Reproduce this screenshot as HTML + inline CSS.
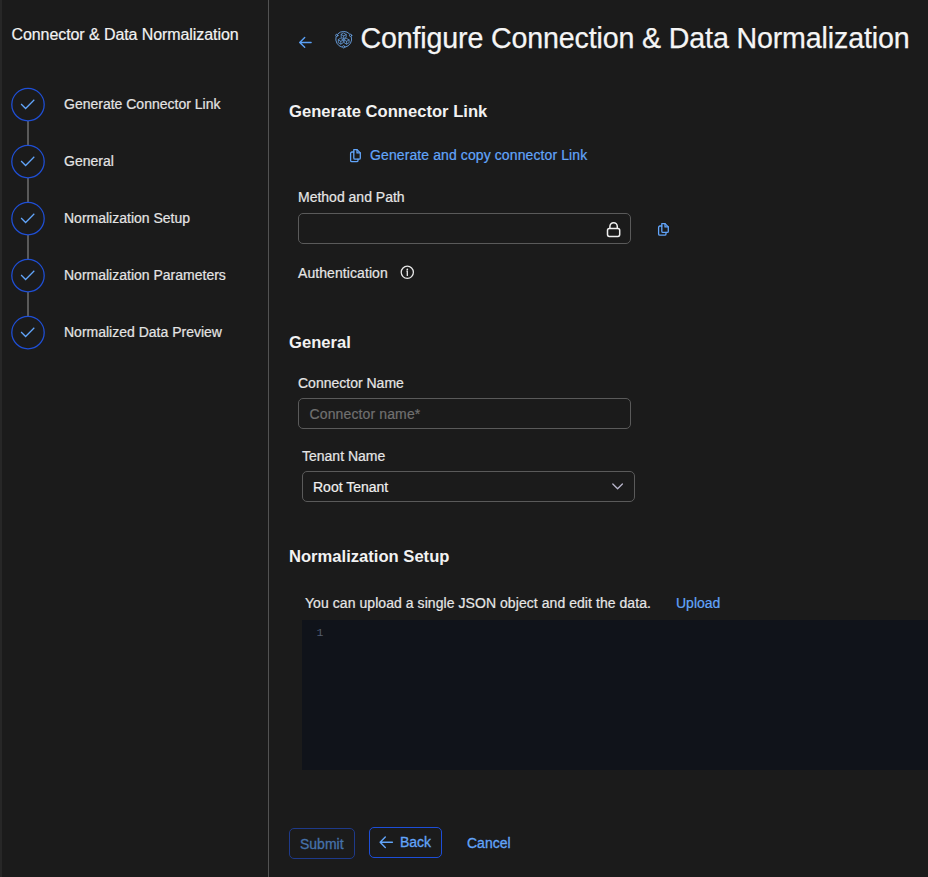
<!DOCTYPE html>
<html>
<head>
<meta charset="utf-8">
<style>
html,body{margin:0;padding:0;}
body{width:928px;height:877px;overflow:hidden;background:#1b1b1b;position:relative;font-family:"Liberation Sans",sans-serif;color:#e8e8e8;}
.a{position:absolute;white-space:nowrap;line-height:1;}
.strip{position:absolute;left:0;top:0;width:2px;height:877px;background:#272727;}
.vline{position:absolute;left:268px;top:0;width:1px;height:877px;background:#525252;}
.stitle{left:11.5px;top:27.2px;font-size:16px;color:#f2f2f2;letter-spacing:-0.08px;-webkit-text-stroke:0.2px currentColor;}
.circ{position:absolute;left:11px;width:32px;height:32px;border:1px solid #2450d2;border-radius:50%;}
.conn{position:absolute;left:27px;width:2px;height:24px;background:#5a5a5a;}
.slab{left:64px;font-size:14px;color:#e4e4e4;-webkit-text-stroke:0.2px currentColor;}
.title{left:360.5px;top:24.2px;font-size:28.6px;color:#f5f5f5;letter-spacing:-0.14px;-webkit-text-stroke:0.25px currentColor;}
.h{left:289px;font-size:16.6px;font-weight:bold;color:#f2f2f2;}
.lbl{font-size:14px;color:#e6e6e6;-webkit-text-stroke:0.2px currentColor;}
.blue{color:#62a5fa;}
.box{position:absolute;border:1px solid #5a5a5a;border-radius:5px;box-sizing:border-box;}
.editor{position:absolute;left:302px;top:620px;width:626px;height:150px;background:#10131a;}
.btn{position:absolute;box-sizing:border-box;border-radius:5px;}
</style>
</head>
<body>
<div class="strip"></div>
<div class="vline"></div>
<div class="a stitle">Connector &amp; Data Normalization</div>

<!-- steps -->
<div class="conn" style="top:121px"></div>
<div class="conn" style="top:178px"></div>
<div class="conn" style="top:235px"></div>
<div class="conn" style="top:292px"></div>
<svg style="position:absolute;left:0;top:0" width="60" height="360">
  <g fill="none" stroke="#1f4fd6" stroke-width="1.25">
    <circle cx="28" cy="104.6" r="16.2"/>
    <circle cx="28" cy="161.6" r="16.2"/>
    <circle cx="28" cy="218.6" r="16.2"/>
    <circle cx="28" cy="275.6" r="16.2"/>
    <circle cx="28" cy="332.6" r="16.2"/>
  </g>
  <g fill="none" stroke="#62a5fa" stroke-width="1.25" stroke-linecap="butt" stroke-linejoin="miter">
    <path d="M21.1 104.0 L25.6 108.5 L34.3 99.8"/>
    <path d="M21.1 161.0 L25.6 165.5 L34.3 156.8"/>
    <path d="M21.1 218.0 L25.6 222.5 L34.3 213.8"/>
    <path d="M21.1 275.0 L25.6 279.5 L34.3 270.8"/>
    <path d="M21.1 332.0 L25.6 336.5 L34.3 327.8"/>
  </g>
</svg>
<div class="a slab" style="top:97.0px">Generate Connector Link</div>
<div class="a slab" style="top:154.0px">General</div>
<div class="a slab" style="top:211.0px">Normalization Setup</div>
<div class="a slab" style="top:268.0px">Normalization Parameters</div>
<div class="a slab" style="top:325.0px">Normalized Data Preview</div>

<!-- header -->
<svg style="position:absolute;left:296px;top:34px" width="18" height="16" viewBox="296 34 18 16">
  <g fill="none" stroke="#5aa0f5" stroke-width="1.4" stroke-linecap="round" stroke-linejoin="round">
    <path d="M299.7 42.45 L311.1 42.45 M304.7 37.6 L299.7 42.45 L304.7 47.3"/>
  </g>
</svg>
<svg style="position:absolute;left:333px;top:29px" width="22" height="22" viewBox="333 29 22 22">
  <g fill="none" stroke="#6aa3e4" stroke-linecap="round" stroke-linejoin="round">
    <g stroke-width="0.9">
    <path d="M337.95 33.74 A8 8 0 0 1 349.45 33.74"/>
    <path d="M351.39 37.09 A8 8 0 0 1 345.64 47.06"/>
    <path d="M341.76 47.06 A8 8 0 0 1 336.01 37.09"/>
    <circle cx="336.8" cy="35.4" r="1.15"/>
    <circle cx="350.6" cy="35.4" r="1.15"/>
    <circle cx="343.7" cy="46.8" r="1.15"/>
    </g>
    <g stroke-width="0.75">
    <path d="M343.70 33.10 L346.20 34.50 L346.20 37.30 L343.70 38.70 L341.20 37.30 L341.20 34.50 Z M341.20 34.50 L343.70 35.90 L346.20 34.50 M343.70 35.90 L343.70 38.70"/>
    <path d="M340.80 38.50 L343.30 39.90 L343.30 42.70 L340.80 44.10 L338.30 42.70 L338.30 39.90 Z M338.30 39.90 L340.80 41.30 L343.30 39.90 M340.80 41.30 L340.80 44.10"/>
    <path d="M346.60 38.50 L349.10 39.90 L349.10 42.70 L346.60 44.10 L344.10 42.70 L344.10 39.90 Z M344.10 39.90 L346.60 41.30 L349.10 39.90 M346.60 41.30 L346.60 44.10"/>
    </g>
  </g>
</svg>
<div class="a title">Configure Connection &amp; Data Normalization</div>

<div class="a h" style="top:103.7px">Generate Connector Link</div>
<div class="a lbl blue" style="left:370px;top:147.9px;letter-spacing:0.1px">Generate and copy connector Link</div>
<div class="a lbl" style="left:298px;top:190px">Method and Path</div>
<div class="box" style="left:298px;top:213px;width:333px;height:31px"></div>
<div class="a lbl" style="left:298px;top:265.7px;letter-spacing:0.08px">Authentication</div>
<!-- copy icon in link -->
<svg style="position:absolute;left:348px;top:147px" width="16" height="17" viewBox="0 0 16 17">
  <g fill="none" stroke="#62a5fa" stroke-width="1.3" stroke-linejoin="round" stroke-linecap="round">
    <path d="M5.8 2.6 L9 2.6 L12.3 5.9 L12.3 11 Q12.3 12.2 11.1 12.2 L7 12.2 Q5.8 12.2 5.8 11 Z"/>
    <path d="M9 2.6 L9 5.9 L12.3 5.9"/>
    <path d="M5.8 5 L4 5 Q2.6 5 2.6 6.4 L2.6 13.4 Q2.6 14.7 4 14.7 L8.6 14.7 Q10 14.7 10 13.4 L10 12.2"/>
  </g>
</svg>
<!-- lock -->
<svg style="position:absolute;left:604px;top:219px" width="20" height="20" viewBox="604 219 20 20">
  <g fill="none" stroke="#f0f0f0" stroke-width="1.5" stroke-linejoin="round">
    <rect x="607.5" y="228.6" width="12.2" height="7.8" rx="1.8"/>
    <path d="M609.9 228.6 L609.9 226.4 A3.7 3.7 0 0 1 617.3 226.4 L617.3 228.6"/>
  </g>
</svg>
<!-- copy icon right -->
<svg style="position:absolute;left:656px;top:221px" width="16" height="17" viewBox="0 0 16 17">
  <g fill="none" stroke="#62a5fa" stroke-width="1.3" stroke-linejoin="round" stroke-linecap="round">
    <path d="M5.8 2.6 L9 2.6 L12.3 5.9 L12.3 10.2 Q12.3 11.4 11.1 11.4 L7 11.4 Q5.8 11.4 5.8 10.2 Z"/>
    <path d="M9 2.6 L9 5.9 L12.3 5.9"/>
    <path d="M5.8 5 L4 5 Q2.6 5 2.6 6.4 L2.6 12.9 Q2.6 14.2 4 14.2 L8.6 14.2 Q10 14.2 10 12.9 L10 11.4"/>
  </g>
</svg>
<!-- info -->
<svg style="position:absolute;left:398px;top:263px" width="18" height="18" viewBox="398 263 18 18">
  <g fill="none" stroke="#e8e8e8" stroke-width="1.3">
    <circle cx="407.3" cy="272.3" r="6.1"/>
    <path d="M406.4 271.2 L407.3 271.2 L407.3 275.9"/>
  </g>
  <circle cx="407.3" cy="269.4" r="0.85" fill="#e8e8e8"/>
</svg>

<div class="a h" style="top:334.7px">General</div>
<div class="a lbl" style="left:298px;top:376.2px">Connector Name</div>
<div class="box" style="left:298px;top:398px;width:333px;height:31px"></div>
<div class="a lbl" style="left:309.5px;top:407.2px;color:#707070;letter-spacing:0.13px">Connector name*</div>
<div class="a lbl" style="left:302px;top:449.1px">Tenant Name</div>
<div class="box" style="left:302px;top:471px;width:333px;height:31px"></div>
<div class="a lbl" style="left:313px;top:480.3px;color:#f0f0f0">Root Tenant</div>
<svg style="position:absolute;left:608px;top:479px" width="20" height="14" viewBox="608 479 20 14">
  <path d="M612.8 484.0 L617.6 488.8 L622.4 484.0" fill="none" stroke="#b9b6cc" stroke-width="1.3" stroke-linecap="round" stroke-linejoin="round"/>
</svg>

<div class="a h" style="top:549.4px">Normalization Setup</div>
<div class="a lbl" style="left:305px;top:596.1px;letter-spacing:0.06px">You can upload a single JSON object and edit the data.</div>
<div class="a lbl blue" style="left:676px;top:596.1px">Upload</div>
<div class="editor"></div>
<div class="a" style="left:316.5px;top:627.3px;font-family:'Liberation Mono',monospace;font-size:11.5px;color:#535d70">1</div>

<div class="btn" style="left:289px;top:828px;width:66px;height:31px;border:1px solid #1e3a8a"></div>
<div class="a lbl" style="left:300px;top:836.6px;color:#4672aa;-webkit-text-stroke:0.3px #4672aa">Submit</div>
<div class="btn" style="left:369px;top:827px;width:73px;height:31px;border:1px solid #1d4ed8"></div>
<div class="a lbl blue" style="left:400px;top:835.3px;-webkit-text-stroke:0.3px #62a5fa">Back</div>
<svg style="position:absolute;left:376px;top:834px" width="20" height="17" viewBox="376 834 20 17">
  <path d="M380.1 842.3 L392.4 842.3 M385.3 837.1 L380.1 842.3 L385.3 847.4" fill="none" stroke="#62a5fa" stroke-width="1.4" stroke-linecap="round" stroke-linejoin="round"/>
</svg>
<div class="a lbl blue" style="left:467px;top:836.2px;-webkit-text-stroke:0.3px #62a5fa">Cancel</div>
</body>
</html>
